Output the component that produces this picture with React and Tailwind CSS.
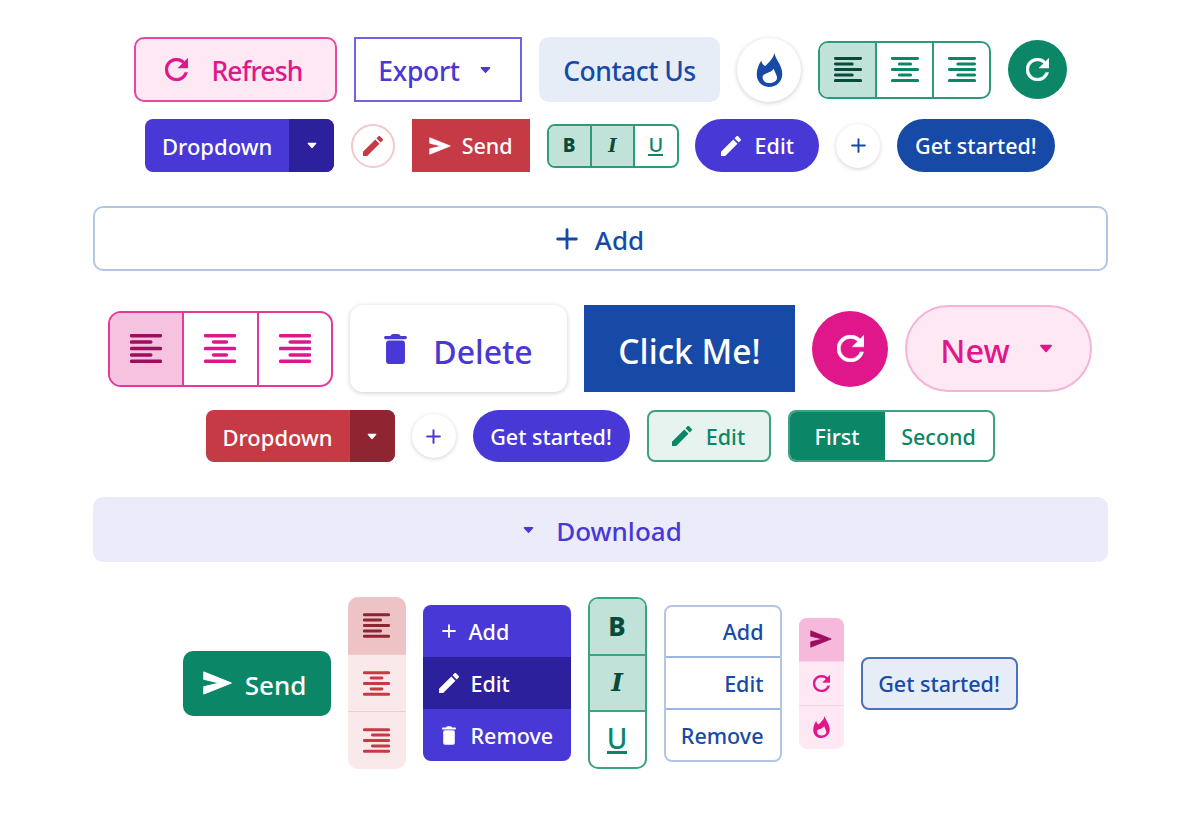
import React from 'react';

const Refresh = ({ className }) => (
	<svg viewBox="4 4 16 16" className={className} fill="currentColor" stroke="currentColor" strokeWidth="0.3" strokeLinejoin="round">
		<path d="M17.65 6.35C16.2 4.9 14.21 4 12 4c-4.42 0-7.99 3.58-7.99 8s3.57 8 7.99 8c3.73 0 6.84-2.55 7.73-6h-2.08c-.82 2.33-3.04 4-5.65 4-3.31 0-6-2.69-6-6s2.69-6 6-6c1.66 0 3.14.69 4.22 1.78L13 11h7V4l-2.35 2.35z" />
	</svg>
);

const Pencil = ({ className }) => (
	<svg viewBox="3 3 18 18" className={className} fill="currentColor">
		<path d="M3 17.25V21h3.75L17.81 9.94l-3.75-3.75L3 17.25zM20.71 7.04c.39-.39.39-1.02 0-1.41l-2.34-2.34c-.39-.39-1.02-.39-1.41 0l-1.83 1.83 3.75 3.75 1.83-1.83z" />
	</svg>
);

const Send = ({ className }) => (
	<svg viewBox="22 30 84 70" className={className} fill="currentColor">
		<path d="M24 33 L104 65 L24 97 L24 76 L70 65 L24 54 Z" stroke="currentColor" strokeWidth="3" strokeLinejoin="round" />
	</svg>
);

const Trash = ({ className }) => (
	<svg viewBox="28 26 70 92" className={className} fill="currentColor">
		<path d="M50 28 Q52 26 56 26 H70 Q74 26 76 28 L79 32 H94 Q98 33 98 37 Q98 41 94 42 H32 Q28 41 28 37 Q28 33 32 32 H47 Z" />
		<rect x="34" y="46" width="58" height="72" rx="9" />
	</svg>
);

const Flame = ({ className }) => (
	<svg viewBox="30 18 78 104" className={className} fill="currentColor">
		<path
			fillRule="evenodd"
			d="M84 18 C88 40 108 55 108 82 C108 105 90 122 68 122 C46 122 30 105 30 84 C30 68 36 52 44 42 C46 50 50 56 56 58 C66 48 80 36 84 18 Z M82 66 C85 78 92 84 92 94 C92 104 82 110 70 110 C56 110 48 102 48 92 C48 78 70 82 82 66 Z"
		/>
	</svg>
);

const Plus = ({ className }) => (
	<svg viewBox="0 0 20 20" className={className} stroke="currentColor" strokeWidth="2.6" strokeLinecap="round">
		<path d="M10 1.5 V18.5 M1.5 10 H18.5" />
	</svg>
);

const Caret = ({ className }) => (
	<svg viewBox="0 0 12 8" className={className} fill="currentColor" stroke="currentColor" strokeWidth="1.5" strokeLinejoin="round">
		<path d="M1.5 1.5 H10.5 L6 6.5 Z" />
	</svg>
);

const alignLines = {
	left: 'M3 4 H21 M3 8 H15 M3 12 H21 M3 16 H15 M3 20 H21',
	center: 'M3 4 H21 M8 8 H16 M3 12 H21 M8 16 H16 M3 20 H21',
	right: 'M3 4 H21 M9 8 H21 M3 12 H21 M9 16 H21 M3 20 H21'
};

const Align = ({ side, className }) => (
	<svg viewBox="2 3 20 18" className={className} stroke="currentColor" strokeWidth="2.2" strokeLinecap="round">
		<path d={alignLines[side]} />
	</svg>
);

const font = { fontFamily: '"Noto Sans", sans-serif' };
const serif = { fontFamily: '"DejaVu Serif", serif' };

// text sits a little low in the buttons, so each size gets some top padding
const Sm = ({ children }) => <span className="pt-[2px]">{children}</span>;
const Md = ({ children }) => <span className="pt-[4px]">{children}</span>;
const Lg = ({ children }) => <span className="pt-[6px]">{children}</span>;

function Row({ children, className = '' }) {
	return <div className={`flex justify-center items-center gap-[17px] ${className}`}>{children}</div>;
}

function Dropdown({ bg, dark, height }) {
	return (
		<div className={`flex w-[189px] rounded-lg overflow-hidden text-white text-[22px] font-medium ${height} ${bg}`}>
			<span className="flex w-[144px] items-center justify-center"><Sm>Dropdown</Sm></span>
			<span className={`flex flex-1 items-center justify-center ${dark}`}>
				<Caret className="w-[10px] h-[7px]" />
			</span>
		</div>
	);
}

function PlusCircle({ color }) {
	return (
		<div className={`flex items-center justify-center w-[44px] h-[44px] rounded-full bg-white shadow-[0_1px_4px_rgba(0,0,0,0.18)] ${color}`}>
			<Plus className="w-[15px] h-[15px]" />
		</div>
	);
}

export default function App() {
	return (
		<div style={font} className="w-[1200px] h-[816px] bg-white pt-[37px] flex flex-col">
			<Row className="pl-[1px]">
				<button className="flex items-center justify-center gap-[23px] pr-[3px] w-[203px] h-[65px] rounded-[10px] border-2 border-[#e8479f] bg-[#fde8f3] text-[#e0178a] text-[26.5px] tracking-[-0.8px] font-medium">
					<Refresh className="w-[23px] h-[23px]" />
					<Md>Refresh</Md>
				</button>
				<button className="flex items-center justify-center gap-[20px] pr-[7px] w-[168px] h-[65px] border-2 border-[#6e63e0] text-[#4838d6] text-[26.5px] tracking-[-0.3px] font-medium">
					<Md>Export</Md>
					<Caret className="w-[11px] h-[8px]" />
				</button>
				<button className="flex items-center justify-center w-[181px] h-[65px] rounded-[10px] bg-[#e7edf7] text-[#174aa6] text-[26.5px] tracking-[-0.5px] font-medium">
					<Md>Contact Us</Md>
				</button>
				<div className="flex items-center justify-center w-[64px] h-[64px] rounded-full bg-white text-[#174aa6] shadow-[0_1px_5px_rgba(0,0,0,0.2)]">
					<Flame className="w-[27px] h-[34px]" />
				</div>
				<div className="flex w-[173px] h-[58px] rounded-[10px] border-2 border-[#2d9a7e] overflow-hidden divide-x-2 divide-[#2d9a7e] text-[#0b8667]">
					<span className="flex flex-1 items-center justify-center bg-[#c1e2d8] text-[#0a4a3a]"><Align side="left" className="w-[28px] h-[25px]" /></span>
					<span className="flex flex-1 items-center justify-center"><Align side="center" className="w-[28px] h-[25px]" /></span>
					<span className="flex flex-1 items-center justify-center"><Align side="right" className="w-[28px] h-[25px]" /></span>
				</div>
				<div className="flex items-center justify-center w-[59px] h-[59px] rounded-full bg-[#0b8667] text-white">
					<Refresh className="w-[23px] h-[23px]" />
				</div>
			</Row>

			<Row className="mt-[17px] !gap-[16.8px]">
				<Dropdown bg="bg-[#4838d6]" dark="bg-[#2c209c]" height="h-[53px]" />
				<div className="flex items-center justify-center w-[44px] h-[44px] rounded-full border-2 border-[#f1c9cc] text-[#c63a45]">
					<Pencil className="w-[20px] h-[20px]" />
				</div>
				<button className="flex items-center justify-center gap-[11px] w-[118px] h-[53px] bg-[#c63a45] text-white text-[21.5px] font-medium">
					<Send className="w-[22px] h-[18px]" />
					<Sm>Send</Sm>
				</button>
				<div className="flex w-[132px] h-[44px] rounded-lg border-2 border-[#2d9a7e] overflow-hidden divide-x-2 divide-[#2d9a7e] text-[#0b8667]">
					<span className="flex flex-1 items-center justify-center bg-[#c1e2d8] text-[#0a4a3a] text-[19px] font-extrabold">B</span>
					<span style={serif} className="flex flex-1 items-center justify-center bg-[#c1e2d8] text-[#0a4a3a] text-[18px] font-bold italic">I</span>
					<span className="flex flex-1 items-center justify-center text-[20px] font-medium"><span className="border-b-2 border-[#0b8667] leading-[19px]">U</span></span>
				</div>
				<button className="flex items-center justify-center gap-[14px] w-[124px] h-[53px] rounded-full bg-[#4838d6] text-white text-[21.5px] font-medium">
					<Pencil className="w-[20px] h-[20px]" />
					<Sm>Edit</Sm>
				</button>
				<PlusCircle color="text-[#174aa6]" />
				<button className="flex items-center justify-center w-[158px] h-[53px] rounded-full bg-[#174aa6] text-white text-[21.5px] font-medium">
					<Sm>Get started!</Sm>
				</button>
			</Row>

			<button className="flex items-center justify-center gap-[17px] mx-[92.5px] mt-[34px] h-[65px] rounded-[10px] border-2 border-[#b4c6e6] text-[#174aa6] text-[26px] font-medium">
				<Plus className="w-[22px] h-[22px]" />
				<Md>Add</Md>
			</button>

			<Row className="mt-[34px]">
				<div className="flex w-[225px] h-[76px] rounded-[13px] border-2 border-[#e8379a] overflow-hidden divide-x-2 divide-[#e8379a] text-[#e0178a]">
					<span className="flex flex-1 items-center justify-center bg-[#f6c2df] text-[#9a0f5e]"><Align side="left" className="w-[32px] h-[29px]" /></span>
					<span className="flex flex-1 items-center justify-center"><Align side="center" className="w-[32px] h-[29px]" /></span>
					<span className="flex flex-1 items-center justify-center"><Align side="right" className="w-[32px] h-[29px]" /></span>
				</div>
				<button className="flex items-center justify-center gap-[26px] w-[217px] h-[87px] rounded-[13px] bg-white text-[#4838d6] text-[32px] font-medium shadow-[0_1px_5px_rgba(0,0,0,0.2)]">
					<Trash className="w-[23px] h-[30px]" />
					<Lg>Delete</Lg>
				</button>
				<button className="flex items-center justify-center w-[211px] h-[87px] bg-[#174aa6] text-white text-[33.5px] font-medium">
					<Lg>Click Me!</Lg>
				</button>
				<div className="flex items-center justify-center w-[76px] h-[76px] rounded-full bg-[#e0178a] text-white">
					<Refresh className="w-[27px] h-[27px]" />
				</div>
				<button className="flex items-center justify-center gap-[29px] pr-[4px] w-[187px] h-[87px] rounded-full border-2 border-[#f6b3d8] bg-[#fde8f3] text-[#e0178a] text-[32.5px] font-medium">
					<Lg>New</Lg>
					<Caret className="w-[14px] h-[9px]" />
				</button>
			</Row>

			<Row className="mt-[18px]">
				<Dropdown bg="bg-[#c63a45]" dark="bg-[#8f2530]" height="h-[52px]" />
				<PlusCircle color="text-[#4838d6]" />
				<button className="flex items-center justify-center w-[157px] h-[52px] rounded-full bg-[#4838d6] text-white text-[21.5px] font-medium">
					<Sm>Get started!</Sm>
				</button>
				<button className="flex items-center justify-center gap-[14px] w-[124px] h-[52px] rounded-lg border-2 border-[#3da184] bg-[#e6f3ef] text-[#0b8667] text-[21.5px] font-medium">
					<Pencil className="w-[20px] h-[20px]" />
					<Sm>Edit</Sm>
				</button>
				<div className="flex w-[207px] h-[52px] rounded-lg border-2 border-[#3da184] overflow-hidden text-[21.5px] font-medium">
					<span className="flex w-[95px] items-center justify-center bg-[#0b8667] text-white"><Sm>First</Sm></span>
					<span className="flex flex-1 items-center justify-center text-[#0b8667]"><Sm>Second</Sm></span>
				</div>
			</Row>

			<button className="flex items-center justify-center gap-[22px] mx-[92.5px] mt-[35px] pl-[5px] h-[65px] rounded-[10px] bg-[#ecebfa] text-[#4838d6] text-[26px] font-medium">
				<Caret className="w-[11px] h-[8px]" />
				<Md>Download</Md>
			</button>

			<Row className="mt-[35px]">
				<button className="flex items-center justify-center gap-[13px] pr-[4px] w-[148px] h-[65px] rounded-[10px] bg-[#0b8667] text-white text-[26px] font-medium">
					<Send className="w-[29px] h-[24px]" />
					<Md>Send</Md>
				</button>
				<div className="flex flex-col w-[58px] h-[172px] rounded-[10px] overflow-hidden divide-y divide-[#eecdd0] bg-[#f9e9ea] text-[#c63a45]">
					<span className="flex flex-1 items-center justify-center bg-[#eec3c6] text-[#8f2530]"><Align side="left" className="w-[27px] h-[25px]" /></span>
					<span className="flex flex-1 items-center justify-center"><Align side="center" className="w-[27px] h-[25px]" /></span>
					<span className="flex flex-1 items-center justify-center"><Align side="right" className="w-[27px] h-[25px]" /></span>
				</div>
				<div className="flex flex-col w-[148px] h-[156px] rounded-lg overflow-hidden bg-[#4838d6] text-white text-[21.5px] font-medium">
					<span className="flex flex-1 items-center gap-[13px] pl-[19px]"><Plus className="w-[14px] h-[14px]" /><Sm>Add</Sm></span>
					<span className="flex flex-1 items-center gap-[12px] pl-[16px] bg-[#2c209c]"><Pencil className="w-[20px] h-[20px]" /><Sm>Edit</Sm></span>
					<span className="flex flex-1 items-center gap-[15px] pl-[19px]"><Trash className="w-[14px] h-[19px]" /><Sm>Remove</Sm></span>
				</div>
				<div className="flex flex-col w-[59px] h-[172px] rounded-[10px] border-2 border-[#3da184] overflow-hidden divide-y-2 divide-[#3da184] text-[#0b8667]">
					<span className="flex flex-1 items-center justify-center bg-[#c1e2d8] text-[#0a4a3a] text-[26px] font-extrabold">B</span>
					<span style={serif} className="flex flex-1 items-center justify-center bg-[#c1e2d8] text-[#0a4a3a] text-[25px] font-bold italic">I</span>
					<span className="flex flex-1 items-center justify-center text-[28px] font-medium"><span className="border-b-[3px] border-[#0b8667] leading-[26px]">U</span></span>
				</div>
				<div className="flex flex-col w-[118px] h-[157px] rounded-lg border-2 border-[#b4c6e6] overflow-hidden divide-y-2 divide-[#9db5e0] text-[#174aa6] text-[21.5px] font-medium text-right">
					<span className="flex flex-1 items-center justify-end pr-[16px]"><Sm>Add</Sm></span>
					<span className="flex flex-1 items-center justify-end pr-[16px]"><Sm>Edit</Sm></span>
					<span className="flex flex-1 items-center justify-end pr-[16px]"><Sm>Remove</Sm></span>
				</div>
				<div className="flex flex-col w-[45px] h-[131px] rounded-lg overflow-hidden divide-y divide-[#f9d4e9] bg-[#fde8f3] text-[#e0178a]">
					<span className="flex flex-1 items-center justify-center bg-[#f6b9dc] text-[#9a0f5e]"><Send className="w-[22px] h-[18px]" /></span>
					<span className="flex flex-1 items-center justify-center"><Refresh className="w-[17px] h-[17px]" /></span>
					<span className="flex flex-1 items-center justify-center"><Flame className="w-[17px] h-[22px]" /></span>
				</div>
				<button className="flex items-center justify-center w-[157px] h-[53px] rounded-lg border-2 border-[#4a72bf] bg-[#e7edf7] text-[#174aa6] text-[21.5px] font-medium">
					<Sm>Get started!</Sm>
				</button>
			</Row>
		</div>
	);
}
